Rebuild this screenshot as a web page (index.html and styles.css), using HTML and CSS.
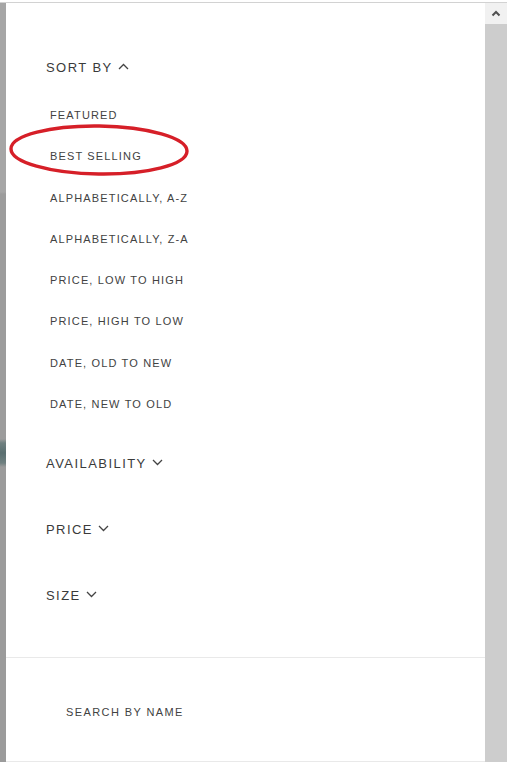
FILE: index.html
```html
<!DOCTYPE html>
<html lang="en">
<head>
<meta charset="utf-8">
<title>Filters</title>
<link rel="stylesheet" href="styles.css">
</head>
<body>
<div class="page">
  <div class="frame">
    <div class="backdrop"></div>
    <div class="panel">
      <div class="filters">
        <div class="group-head open">SORT BY
          <svg class="chev" width="11" height="7" viewBox="0 0 11 7"><path d="M1 6 L5.5 1.5 L10 6" fill="none" stroke="#444" stroke-width="1.3"/></svg>
        </div>
        <ul class="sort-list">
          <li>FEATURED</li>
          <li>BEST SELLING</li>
          <li>ALPHABETICALLY, A-Z</li>
          <li>ALPHABETICALLY, Z-A</li>
          <li>PRICE, LOW TO HIGH</li>
          <li>PRICE, HIGH TO LOW</li>
          <li>DATE, OLD TO NEW</li>
          <li>DATE, NEW TO OLD</li>
        </ul>
        <div class="group-head first-closed">AVAILABILITY
          <svg class="chev" width="11" height="7" viewBox="0 0 11 7"><path d="M1 1 L5.5 5.5 L10 1" fill="none" stroke="#444" stroke-width="1.3"/></svg>
        </div>
        <div class="group-head">PRICE
          <svg class="chev" width="11" height="7" viewBox="0 0 11 7"><path d="M1 1 L5.5 5.5 L10 1" fill="none" stroke="#444" stroke-width="1.3"/></svg>
        </div>
        <div class="group-head">SIZE
          <svg class="chev" width="11" height="7" viewBox="0 0 11 7"><path d="M1 1 L5.5 5.5 L10 1" fill="none" stroke="#444" stroke-width="1.3"/></svg>
        </div>
      </div>
      <div class="search">SEARCH BY NAME</div>
    </div>
    <div class="scrollbar">
      <div class="scroll-btn">
        <svg width="10" height="7" viewBox="0 0 10 7"><path d="M1.5 5.5 L5 2 L8.5 5.5" fill="none" stroke="#505050" stroke-width="2"/></svg>
      </div>
      <div class="scroll-thumb"></div>
    </div>
  </div>
  <svg class="annotation" width="190" height="60" viewBox="0 0 190 60">
    <ellipse cx="99" cy="26" rx="88" ry="24" fill="none" stroke="#d61f28" stroke-width="3.4" transform="rotate(0.8 99 26)"/>
  </svg>
</div>
</body>
</html>
```
FILE: styles.css
```css
html, body {
  margin: 0;
  padding: 0;
  background: #ffffff;
}

body {
  font-family: "Liberation Sans", Arial, sans-serif;
  color: #404040;
}

.page {
  position: relative;
  width: 507px;
  height: 773px;
  padding-top: 2px;
  box-sizing: border-box;
}

.frame {
  display: flex;
  height: 759px;
  border-top: 1px solid #d2d2d2;
}

.backdrop {
  width: 6px;
  flex: none;
  background: linear-gradient(to bottom,
    #a6a6a6 0px, #a6a6a6 189px,
    #9c9c9c 191px, #9c9c9c 436px,
    #6f8080 440px, #5a6f70 450px, #6f8080 460px,
    #9b9b9b 464px, #9b9b9b 100%);
}

.panel {
  flex: 1;
  display: flex;
  flex-direction: column;
  border-bottom: 1px solid #e9e9e9;
}

.filters {
  padding-left: 40px;
  padding-top: 47px;
  padding-bottom: 29px;
  border-bottom: 1px solid #e9e9e9;
}

.group-head {
  display: flex;
  align-items: center;
  height: 66px;
  font-size: 13px;
  letter-spacing: 1.45px;
  color: #3a3a3a;
}

.group-head.open {
  height: 34px;
}

.group-head.first-closed {
  margin-top: 5px;
}

.chev {
  margin-left: 5px;
  margin-top: -1px;
}

.sort-list {
  list-style: none;
  margin: 11px 0 0 0;
  padding: 0 0 0 4px;
}

.sort-list li {
  height: 41.3px;
  line-height: 41.3px;
  font-size: 11px;
  letter-spacing: 1.15px;
  color: #424242;
}

.search {
  flex: 1;
  display: flex;
  align-items: center;
  padding-left: 60px;
  padding-top: 4px;
  font-size: 11px;
  letter-spacing: 1.4px;
  color: #424242;
}

.scrollbar {
  width: 22px;
  flex: none;
  display: flex;
  flex-direction: column;
}

.scroll-btn {
  height: 21px;
  background: #f1f1f1;
  display: flex;
  align-items: center;
  justify-content: center;
}

.scroll-thumb {
  flex: 1;
  background: #cdcdcd;
}

.annotation {
  position: absolute;
  left: 0;
  top: 124px;
}
```
